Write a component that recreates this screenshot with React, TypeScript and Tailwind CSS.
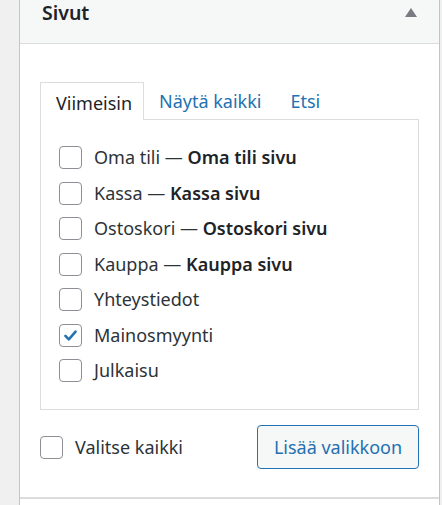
import React, { useState } from 'react'

const pages = [
  { id: 1, title: 'Oma tili', state: 'Oma tili sivu' },
  { id: 2, title: 'Kassa', state: 'Kassa sivu' },
  { id: 3, title: 'Ostoskori', state: 'Ostoskori sivu' },
  { id: 4, title: 'Kauppa', state: 'Kauppa sivu' },
  { id: 5, title: 'Yhteystiedot' },
  { id: 6, title: 'Mainosmyynti' },
  { id: 7, title: 'Julkaisu' },
]

function Check({ checked, onClick }: { checked: boolean; onClick: () => void }) {
  return (
    <span
      onClick={onClick}
      className="flex-shrink-0 w-[23px] h-[23px] rounded-[4px] border border-[#8c8f94] bg-white flex items-center justify-center cursor-pointer"
    >
      {checked && (
        <svg width="17" height="17" viewBox="0 0 20 20">
          <path d="M4 10.5l4 4 8-9" fill="none" stroke="#2271b1" strokeWidth="3" strokeLinecap="round" strokeLinejoin="round" />
        </svg>
      )}
    </span>
  )
}

export default function App() {
  const [selected, setSelected] = useState<number[]>([6])
  const [all, setAll] = useState(false)

  const toggle = (id: number) => {
    setSelected(prev => (prev.includes(id) ? prev.filter(x => x !== id) : [...prev, id]))
  }

  return (
    <div
      className="w-[442px] h-[505px] bg-[#f0f0f1] flex overflow-hidden text-[#3c434a]"
      style={{ fontFamily: '"Noto Sans", "Open Sans", sans-serif' }}
    >
      <div className="w-[19px] flex-shrink-0" />
      <div className="w-[421px] flex-shrink-0 border-x border-[#c3c4c7] bg-white flex flex-col">
        {/* otsikko */}
        <div className="h-[44px] bg-[#f6f7f7] border-b border-[#dcdcde] flex items-center justify-between pl-[22px] pr-[22px] pb-[18px]">
          <span className="text-[19.5px] font-semibold text-[#1d2327] leading-none">Sivut</span>
          <svg width="12" height="9" viewBox="0 0 12 9">
            <path d="M6 0L12 9H0z" fill="#787c82" />
          </svg>
        </div>

        <div className="px-[20px] pt-[37px]">
          {/* välilehdet */}
          <div className="flex h-[38px] text-[18px] leading-none">
            <div className="w-[104px] border border-b-0 border-[#dcdcde] bg-white flex items-center pl-[15px] pt-[2px] relative top-[1px] h-[38px] text-[#1d2327]">
              Viimeisin
            </div>
            <div className="flex items-center pl-[15px] pt-[2px] text-[#2271b1]">Näytä kaikki</div>
            <div className="flex items-center pl-[29px] pt-[2px] text-[#2271b1]">Etsi</div>
          </div>

          <div className="h-[291px] border border-[#dcdcde] pt-[20px] pl-[18px]">
            {pages.map(p => (
              <div key={p.id} className="h-[35.5px] flex items-center gap-[12px] text-[18px] text-[#2c3338]">
                <Check checked={selected.includes(p.id)} onClick={() => toggle(p.id)} />
                <span className="whitespace-nowrap">
                  {p.title}
                  {p.state && (
                    <>
                      {' — '}
                      <strong className="font-semibold text-[#1d2327]">{p.state}</strong>
                    </>
                  )}
                </span>
              </div>
            ))}
          </div>

          <div className="flex items-center justify-between mt-[15px] mb-[28px]">
            <label className="flex items-center gap-[12px] text-[18px] text-[#2c3338]">
              <Check checked={all} onClick={() => setAll(!all)} />
              <span>Valitse kaikki</span>
            </label>
            <button className="w-[162px] h-[44px] rounded-[4px] border border-[#2271b1] bg-[#f6f7f7] text-[#2271b1] text-[18px]">
              Lisää valikkoon
            </button>
          </div>
        </div>
        <div className="border-t-2 border-[#dcdcde] flex-1" />
      </div>
    </div>
  )
}
